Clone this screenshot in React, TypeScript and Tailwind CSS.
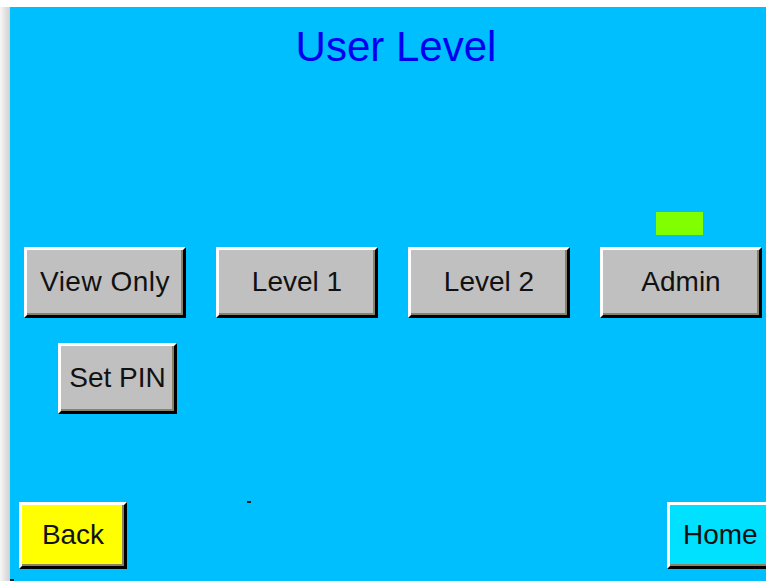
import React from "react";

function Btn({
  label,
  className,
}: {
  label: string;
  className: string;
}) {
  return (
    <div
      className={
        "shrink-0 flex items-center justify-center border-t-[3px] border-l-[3px] border-t-white border-l-white border-b-[3px] border-r-[3px] border-b-black border-r-black shadow-[inset_-2px_-2px_0_#8a8262] text-[28px] leading-none text-[#111111] " +
        className
      }
    >
      <span className="-mt-[1px]">{label}</span>
    </div>
  );
}

export default function App() {
  return (
    <div
      className="w-[766px] h-[581px] bg-white flex flex-col overflow-hidden"
      style={{ fontFamily: '"Liberation Sans", Arial, sans-serif' }}
    >
      <div className="h-[7px] shrink-0 bg-white" />
      <div className="flex flex-1 min-h-0">
        <div className="w-[10px] shrink-0 bg-gradient-to-r from-[#f7f7f7] to-[#d0d0d0]" />
        <div className="relative flex-1 bg-[#00bfff] flex flex-col overflow-hidden">
          <h1 className="mt-[16px] text-center text-[42px] leading-[48px] text-[#0000f0] pl-[16px]">
            User Level
          </h1>
          <div className="mt-[141px] ml-[646px] w-[47px] h-[23px] bg-[#80ff00] shrink-0" />
          <div className="mt-[12px] flex gap-[30px] pl-[14px]">
            <Btn label="View Only" className="w-[162px] h-[71px] bg-[#c0c0c0] tracking-[0.5px]" />
            <Btn label="Level 1" className="w-[162px] h-[71px] bg-[#c0c0c0]" />
            <Btn label="Level 2" className="w-[162px] h-[71px] bg-[#c0c0c0]" />
            <Btn label="Admin" className="w-[162px] h-[71px] bg-[#c0c0c0]" />
          </div>
          <div className="mt-[25px] flex pl-[48px]">
            <Btn label="Set PIN" className="w-[119px] h-[71px] bg-[#c0c0c0]" />
          </div>
          <div className="mt-[88px] flex pl-[9px]">
            <Btn label="Back" className="w-[108px] h-[67px] bg-[#ffff00]" />
            <Btn label="Home" className="ml-[540px] w-[112px] h-[67px] bg-[#00e0ff] justify-start pl-[13px]" />
          </div>
          <div className="absolute left-[237px] top-[494px] w-[4px] h-[2px] bg-[#202020]" />
          <div className="absolute left-0 top-[572px] w-[4px] h-[2px] bg-[#202020]" />
        </div>
      </div>
    </div>
  );
}
